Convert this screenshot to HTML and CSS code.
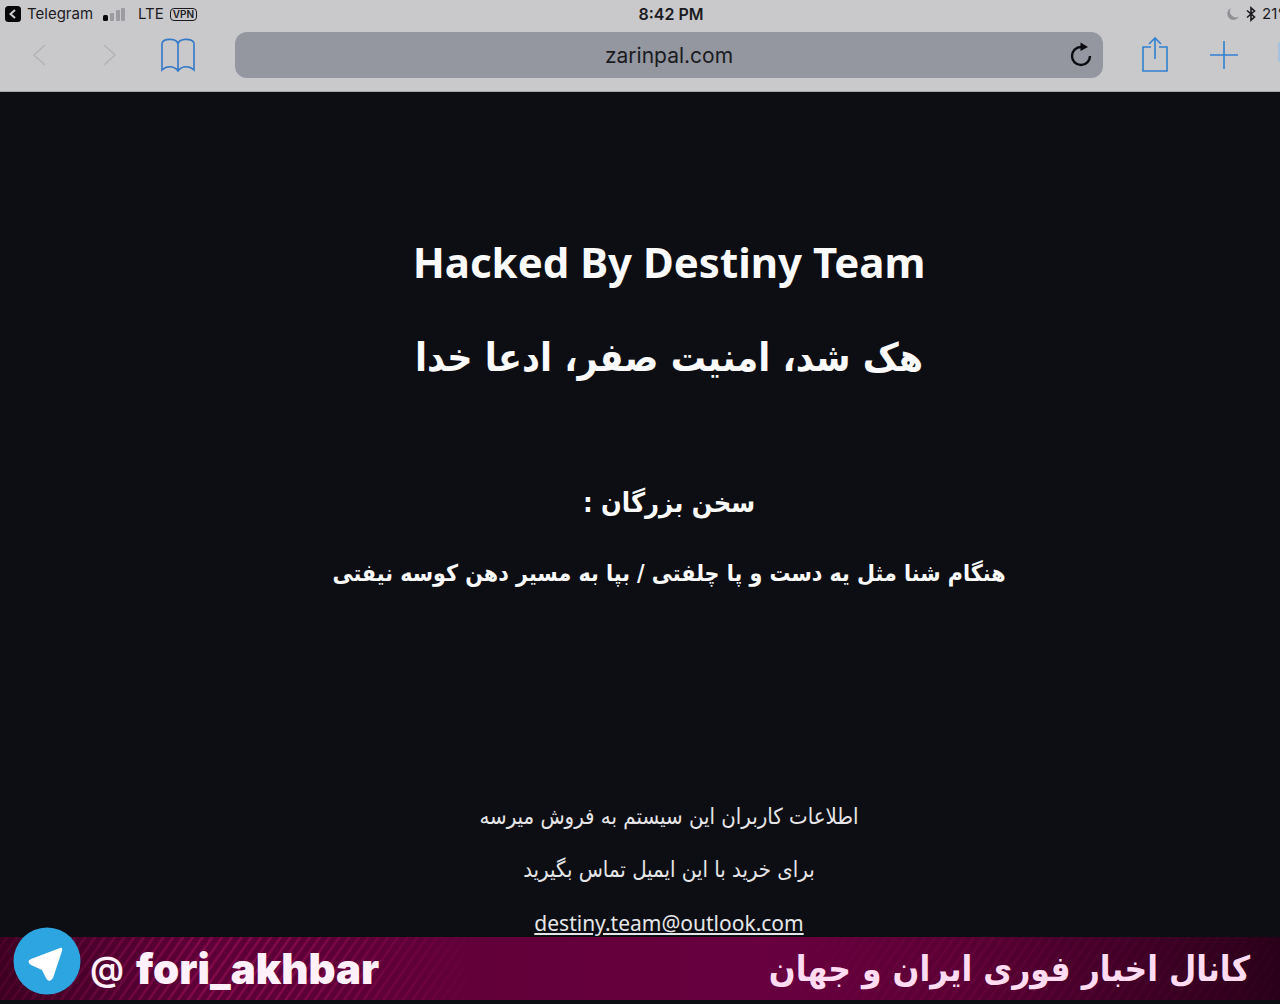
FILE: index.html
```
<!DOCTYPE html>
<html lang="fa">
<head>
    <meta charset="UTF-8">
    <meta name="viewport" content="width=device-width, initial-scale=1.0">
    <title>zarinpal.com</title>
    <link rel="stylesheet" href="styles.css">
</head>
<body>
    <header class="browser">
        <div class="status-bar">
            <div class="status-left">
                <svg class="back-app" width="16" height="16" viewBox="0 0 16 16">
                    <rect width="16" height="16" rx="3.5" fill="#08080a"/>
                    <path d="M10 4 L5.5 8 L10 12" fill="none" stroke="#d0d0d4" stroke-width="2"/>
                </svg>
                <span>Telegram</span>
                <svg class="signal" width="23" height="14" viewBox="0 0 23 14">
                    <rect x="0" y="8" width="5" height="6" rx="1.5" fill="#08080a"/>
                    <rect x="7" y="6" width="4" height="8" rx="1" fill="#9b9ba0"/>
                    <rect x="13" y="3" width="4" height="11" rx="1" fill="#9b9ba0"/>
                    <rect x="18" y="1" width="4" height="13" rx="1" fill="#9b9ba0"/>
                </svg>
                <span class="network">LTE</span>
                <span class="vpn">VPN</span>
            </div>
            <div class="clock">8:42 PM</div>
            <div class="status-right">
                <svg width="14" height="14" viewBox="0 0 14 14">
                    <path d="M5 1 A6.2 6.2 0 1 0 13 9.5 A6 6 0 0 1 5 1 Z" fill="#8f8f94"/>
                </svg>
                <svg width="10" height="16" viewBox="0 0 10 16">
                    <path d="M1 4.5 L8.5 11 L5 14.2 V1.8 L8.5 5 L1 11.5" fill="none" stroke="#1b1b1f" stroke-width="1.6"/>
                </svg>
                <span class="battery">21%</span>
            </div>
        </div>
        <div class="toolbar">
            <button class="tool" aria-label="Back" disabled>
                <svg width="14" height="24" viewBox="0 0 14 24"><path d="M12 2 L1 12 L12 22" fill="none" stroke="#b4b4b8" stroke-width="1.6"/></svg>
            </button>
            <button class="tool" aria-label="Forward" disabled>
                <svg width="14" height="24" viewBox="0 0 14 24"><path d="M2 2 L13 12 L2 22" fill="none" stroke="#b4b4b8" stroke-width="1.6"/></svg>
            </button>
            <button class="tool" aria-label="Bookmarks">
                <svg width="34" height="34" viewBox="0 0 34 34">
                    <path d="M17 33 V6 C16 0 3 0 1 5 V32 C5 28 13 27 17 33 C21 27 29 28 33 32 V5 C31 0 18 0 17 6" fill="none" stroke="#3478c8" stroke-width="1.6"/>
                </svg>
            </button>
            <form class="address">
                <input type="text" value="zarinpal.com" aria-label="Address" dir="ltr">
                <button type="button" class="reload" aria-label="Reload">
                    <svg width="22" height="26" viewBox="0 0 22 26">
                        <path d="M12 5 H11 A9 9 0 1 0 20 14" fill="none" stroke="#0c0c10" stroke-width="2.4"/>
                        <path d="M10.5 0.5 L18 5 L10.5 9 Z" fill="#0c0c10"/>
                    </svg>
                </button>
            </form>
            <button class="tool" aria-label="Share">
                <svg width="28" height="36" viewBox="0 0 28 36">
                    <path d="M10 10 H2 V34 H26 V10 H18 M14 22 V1 M8 7 L14 1 L20 7" fill="none" stroke="#2f80d0" stroke-width="1.6"/>
                </svg>
            </button>
            <button class="tool" aria-label="New tab">
                <svg width="28" height="28" viewBox="0 0 28 28"><path d="M14 0 V28 M0 14 H28" fill="none" stroke="#2f80d0" stroke-width="1.6"/></svg>
            </button>
            <button class="tool tabs" aria-label="Tabs">
                <svg width="26" height="26" viewBox="0 0 26 26"><path d="M1 1 H19 V19 H1 Z M7 19 V25 H25 V7 H19" fill="none" stroke="#9fbfe4" stroke-width="1.6"/></svg>
            </button>
        </div>
    </header>

    <main class="page" dir="rtl">
        <h1 dir="ltr">Hacked By Destiny Team</h1>
        <h1 class="title-fa">هک شد، امنیت صفر، ادعا خدا</h1>
        <h2>سخن بزرگان :</h2>
        <h3>هنگام شنا مثل یه دست و پا چلفتی / بپا به مسیر دهن کوسه نیفتی</h3>
        <div class="contact">
            <p>اطلاعات کاربران این سیستم به فروش میرسه</p>
            <p>برای خرید با این ایمیل تماس بگیرید</p>
            <p><a href="mailto:destiny.team@outlook.com">destiny.team@outlook.com</a></p>
        </div>
    </main>

    <footer class="banner">
        <svg class="telegram" width="68" height="68" viewBox="0 0 68 68">
            <circle cx="34" cy="34" r="33.5" fill="#2ca5e0"/>
            <path d="M47 21 Q50 20 49 24 L40 51 Q36 57 33 51 L29 43 L18 38 Q13 34 18 32 Z" fill="#fff"/>
        </svg>
        <div class="handle"><span class="at">@</span><span>fori_akhbar</span></div>
        <div class="channel" dir="rtl">کانال اخبار فوری ایران و جهان</div>
    </footer>
</body>
</html>
```
FILE: styles.css
```
* {
    box-sizing: border-box;
}
body {
    margin: 0;
    min-height: 100vh;
    display: flex;
    flex-direction: column;
    overflow-x: hidden;
    background: #0d0e13;
    color: #fafafa;
    font-family: "DejaVu Sans Condensed", "DejaVu Sans", sans-serif;
}

/* browser chrome */
.browser {
    height: 92px;
    background: #c9c9cc;
    border-bottom: 1px solid #a5a5aa;
    color: #1b1b1f;
    font-family: Inter, sans-serif;
    overflow: hidden;
}
.status-bar {
    display: grid;
    grid-template-columns: 1fr auto 1fr;
    height: 28px;
    margin-right: -62px;
    align-items: center;
    font-size: 15px;
    line-height: 28px;
}
.status-left,
.status-right {
    display: flex;
    align-items: center;
    gap: 6px;
}
.status-left {
    padding-left: 5px;
}
.status-right {
    justify-content: flex-end;
    padding-right: 50px;
}
.signal {
    margin: 0 6px 0 4px;
}
.vpn {
    padding: 0 2px;
    border: 1px solid #1b1b1f;
    border-radius: 4px;
    font-size: 10px;
    font-weight: 600;
    line-height: 11px;
}
.clock {
    font-size: 16px;
    font-weight: 600;
}
.toolbar {
    display: flex;
    align-items: center;
    height: 54px;
    padding-left: 5px;
}
.tool {
    flex: 0 0 69px;
    min-width: 0;
    height: 48px;
    display: flex;
    align-items: center;
    justify-content: center;
    padding: 0;
    border: none;
    background: none;
}
.tabs {
    flex-basis: 22px;
    justify-content: flex-start;
    padding-left: 20px;
}
.tabs svg {
    flex: none;
}
.address {
    flex: 1;
    display: flex;
    height: 46px;
    margin: 0 17px 0 23px;
    padding-left: 44px;
    border-radius: 12px;
    background: #9496a0;
}
.address input {
    flex: 1;
    min-width: 0;
    padding: 0;
    border: none;
    background: none;
    color: #1b1b1f;
    font-family: inherit;
    font-size: 21px;
    text-align: center;
}
.reload {
    width: 44px;
    padding: 0;
    border: none;
    background: none;
}
.reload svg {
    display: block;
    margin: 0 auto;
}

/* page */
.page {
    flex: 1;
    padding: 141px 0 0 58px;
    text-align: center;
}
h1,
h2,
h3,
p {
    margin: 0;
}
h1 {
    font-family: "Noto Sans", sans-serif;
    font-size: 42px;
    line-height: 58px;
}
.title-fa {
    margin-top: 38px;
    font-family: "DejaVu Sans Condensed", "DejaVu Sans", sans-serif;
    font-size: 39px;
}
h2 {
    margin-top: 95px;
    font-size: 27px;
    line-height: 42px;
}
h3 {
    margin-top: 32px;
    font-size: 23px;
    line-height: 34px;
}
.contact {
    margin-top: 214px;
    color: #e6e6e8;
    font-size: 22px;
    line-height: 26px;
}
.contact p + p {
    margin-top: 27px;
}
.contact a {
    color: inherit;
    font-family: "Noto Sans", sans-serif;
    font-size: 21px;
}

/* channel banner */
.banner {
    display: flex;
    align-items: center;
    height: 63px;
    margin-bottom: 4px;
    padding: 0 30px 0 13px;
    background:
        linear-gradient(90deg, rgba(40, 0, 20, 0.6), transparent 15%),
        linear-gradient(90deg, transparent 22%, #62003a 38%, #68003f 60%, rgba(90, 0, 52, 0.7) 75%, rgba(36, 0, 22, 0.9)),
        repeating-linear-gradient(125deg, #5c0037 0, #5c0037 4px, #8a0a4e 6px, #5c0037 8px);
    color: #fff0fa;
}
.telegram {
    flex: none;
    margin-top: -16px;
}
.handle {
    display: flex;
    align-items: center;
    gap: 12px;
    margin-left: 9px;
    font-family: Inter, sans-serif;
    font-size: 42px;
    font-weight: 900;
    line-height: 58px;
}
.at {
    font-weight: 600;
    font-size: 34px;
}
.channel {
    margin-left: auto;
    color: #ffdcf2;
    font-size: 35px;
    font-weight: 600;
}
```
